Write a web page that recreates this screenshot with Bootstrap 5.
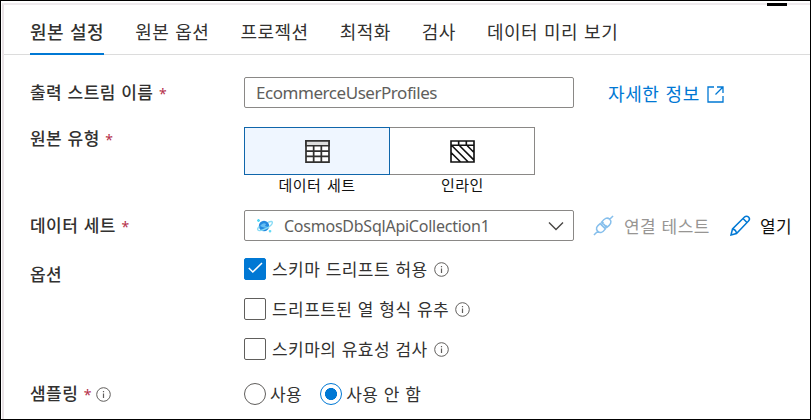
<!DOCTYPE html>
<html lang="ko">
<head>
<meta charset="utf-8">
<meta name="viewport" content="width=device-width, initial-scale=1">
<title>원본 설정</title>
<link href="https://cdn.jsdelivr.net/npm/bootstrap@5.3.0/dist/css/bootstrap.min.css" rel="stylesheet">
<style>
body{font-family:"Noto Sans CJK KR",sans-serif;font-size:17px;letter-spacing:.45px;word-spacing:.2px;line-height:24px;color:#323130;background:#fff}
.frame{height:420px;border:1px solid #000;padding:2px 0 0 1px}
.panel{border-left:2px solid #e9e3e6;border-top:2px solid #eeeaed;height:100%}
.grip{position:absolute;left:767px;top:3px;width:20px;height:3px;background:#000}
.source-tabs{height:50px;gap:31px;padding-left:26px;border-bottom:1px solid #dcdcdc;font-size:18px;letter-spacing:.5px;word-spacing:.4px}
.source-tabs .nav-link{color:#323130;padding:0;height:50px;line-height:52px;white-space:nowrap}
.source-tabs .nav-link.active{font-weight:500;border-bottom:2px solid #0078d4}
.form-line{padding-left:26px}
.line-stream{margin-top:22px}
.line-kind{margin-top:19px}
.line-dataset{margin-top:15px}
.line-options{margin-top:17px}
.line-sampling{margin-top:21px}
.name{width:214px;font-weight:500;flex:none;white-space:nowrap}
.line-kind .name{margin-top:-1px}
.req{color:#b5304a;font-size:14px;font-weight:400;font-family:"Noto Sans",sans-serif;word-spacing:1.5px}
.field{width:330px;height:31px;border:1px solid #8a8886;border-radius:2px;color:#605e5c;font-family:"Noto Sans",sans-serif;letter-spacing:-.45px;background:#fff}
input.field{padding:0 11px;font-size:17px}
.pick{font-size:16px;letter-spacing:-.24px;padding:0 9px 0 11px}
.pick-text{margin-left:11px}
.kind{width:146px;height:48px;border:1px solid #8a8886;background:#fff}
.kind.on{border-color:#0f66ab;background:#eff6ff}
.kind-inline{border-left:0;width:145px}
.kind-text{font-size:15px;color:#111;line-height:20px;text-align:center;word-spacing:1px}
.more{color:#0078d4;font-size:18px;letter-spacing:.6px;word-spacing:.4px;text-decoration:none;margin-left:34px;gap:7px}
.more svg{margin-top:3px}
.test{color:#979593;margin:0 20px 0 10px}
.plug{margin-left:19px}
.open-text{color:#111;margin-left:9px}
.options{gap:18px}
.options label{height:22px}
.opt{margin:0 6px 0 6px}
.form-check-input.box,.form-check-input.dot{width:22px;height:22px;margin:0;border:1px solid #605e5c;flex:none}
.form-check-input.box{border-radius:2px}
.form-check-input.box:checked,.form-check-input.dot:checked{border-color:#0078d4}
.form-check-input.box:checked{background-color:#0078d4;background-image:none}
.tick{position:absolute;left:4px;top:4px;pointer-events:none}
.form-check-input.dot:checked{background:radial-gradient(circle,#0078d4 0 5.7px,#fff 6.3px)}
.dot-text{margin-left:4px}
.second{margin-left:18px}
svg{display:block;flex:none}
</style>
<script src="https://cdn.jsdelivr.net/npm/bootstrap@5.3.0/dist/js/bootstrap.bundle.min.js"></script>
</head>
<body class="overflow-hidden">
<svg width="0" height="0" class="position-absolute"><defs>
<g id="info" fill="none" stroke="#605e5c"><circle cx="7.5" cy="7.5" r="6.8"/><path d="M7.5 6.5V11M7.5 4v1.3" stroke-width="1.2"/></g>
</defs></svg>
<main class="frame">
<div class="panel">
<div class="grip"></div>
<nav class="nav source-tabs flex-nowrap">
<a class="nav-link active" href="#">원본 설정</a><a class="nav-link" href="#">원본 옵션</a><a class="nav-link" href="#">프로젝션</a><a class="nav-link" href="#">최적화</a><a class="nav-link" href="#">검사</a><a class="nav-link" href="#">데이터 미리 보기</a>
</nav>
<form>
<div class="form-line line-stream d-flex align-items-center">
<label class="name" for="stream">출력 스트림 이름<span class="req"> *</span></label>
<input id="stream" class="field" value="EcommerceUserProfiles">
<a href="#" class="more d-flex align-items-center"><span>자세한 정보</span>
<svg width="17" height="17" viewBox="0 0 17 17" fill="none" stroke="#0078d4" stroke-width="1.3"><path d="M7 1H1v15h15v-6M10 1h6v6M16 1L8.5 8.5"/></svg></a>
</div>
<div class="form-line line-kind d-flex">
<div class="name">원본 유형<span class="req"> *</span></div>
<div><div class="kind on d-flex align-items-center justify-content-center">
<svg width="25" height="23" viewBox="0 0 26 24" fill="none" stroke="#323130" stroke-width="1.8"><path d="M1 1h24v22H1z" fill="#fff"/><path d="M1 1h24v5H1z" fill="#ddd"/><path d="M1 11.5h24M1 17h24M9 6v17M17 6v17"/></svg></div>
<div class="kind-text">데이터 세트</div></div>
<div><div class="kind kind-inline d-flex align-items-center justify-content-center">
<svg width="25" height="23" viewBox="0 0 26 24" fill="none" stroke="#111" stroke-width="1.7"><path d="M1 1h24v22H1zM1 5.5h24M9 1v4M17 1v4M2 6l17 17M10 6l15 15M18 6l7 7M1 13l10 10"/></svg></div>
<div class="kind-text">인라인</div></div>
</div>
<div class="form-line line-dataset d-flex align-items-center">
<div class="name">데이터 세트<span class="req"> *</span></div>
<div class="field pick d-flex align-items-center">
<svg width="17" height="16" viewBox="0 0 17 16"><circle cx="8" cy="8" r="5.2" fill="#2489df"/><path d="M4 8q3-4 6-2l-1 2 3 1q-3 2-8-1" fill="#65bdf2"/><path d="M12 4.3C15 3 16.8 3.2 16.2 5.2C15 8.6 6 13.5 2.5 12.4C1 11.8 1.6 10 3.4 8.4" fill="none" stroke="#8adcf5" stroke-width="1.4"/><path d="M2.5 1v3M1 2.500h3M14 12v2.500M12.800 13.200h2.500" stroke="#55d8f6" stroke-width="1.3"/></svg>
<span class="pick-text flex-grow-1">CosmosDbSqlApiCollection1</span>
<svg width="16" height="10" viewBox="0 0 16 10" fill="none" stroke="#484644" stroke-width="1.4"><path d="M1 1.5l7 7 7-7"/></svg>
</div>
<svg class="plug" width="21" height="21" viewBox="0 0 22 22" fill="none" stroke="#86bfec" stroke-width="1.6"><path d="M1 21l4-4M17.500 4.500L21 1M5 17C2.500 14.500 3.500 12 7.500 9l5.500 5.500C10 18.500 7.500 19.500 5 17zM9 7.500C12 3.500 14.800 2 17.500 4.500S18.500 10 14.500 13zM8.500 10l2.500-2.500M12 13.500l2.500-2.500"/></svg>
<span class="test text-nowrap">연결 테스트</span>
<svg width="21" height="21" viewBox="0 0 21 21" fill="none" stroke="#0078d4" stroke-width="1.5"><path d="M1 20l1.500-6L14.500 2a2.800 2.800 0 0 1 4 4L6.500 18.500zM13 3.500l4.500 4.500M2.500 14q3.500.5 4 4.500"/></svg>
<span class="open-text text-nowrap">열기</span>
</div>
<div class="form-line line-options d-flex">
<div class="name pt-1">옵션</div>
<div class="options d-flex flex-column">
<label class="d-flex align-items-center position-relative"><input class="form-check-input box" type="checkbox" checked><svg class="tick" width="15" height="14" viewBox="0 0 15 14" fill="none" stroke="#fff" stroke-width="1.5"><path d="M.8 6l4 4L14 1"/></svg><span class="opt">스키마 드리프트 허용</span><svg width="15" height="15"><use href="#info"/></svg></label>
<label class="d-flex align-items-center"><input class="form-check-input box" type="checkbox"><span class="opt">드리프트된 열 형식 유추</span><svg width="15" height="15"><use href="#info"/></svg></label>
<label class="d-flex align-items-center"><input class="form-check-input box" type="checkbox"><span class="opt">스키마의 유효성 검사</span><svg width="15" height="15"><use href="#info"/></svg></label>
</div></div>
<div class="form-line line-sampling d-flex align-items-center">
<div class="name d-flex align-items-center"><span>샘플링<span class="req"> *</span></span><svg class="ms-1" width="15" height="15"><use href="#info"/></svg></div>
<label class="d-flex align-items-center"><input class="form-check-input dot" type="radio" name="sampling"><span class="dot-text">사용</span></label>
<label class="second d-flex align-items-center"><input class="form-check-input dot" type="radio" name="sampling" checked><span class="dot-text">사용 안 함</span></label>
</div>
</form>
</div>
</main>
</body>
</html>
